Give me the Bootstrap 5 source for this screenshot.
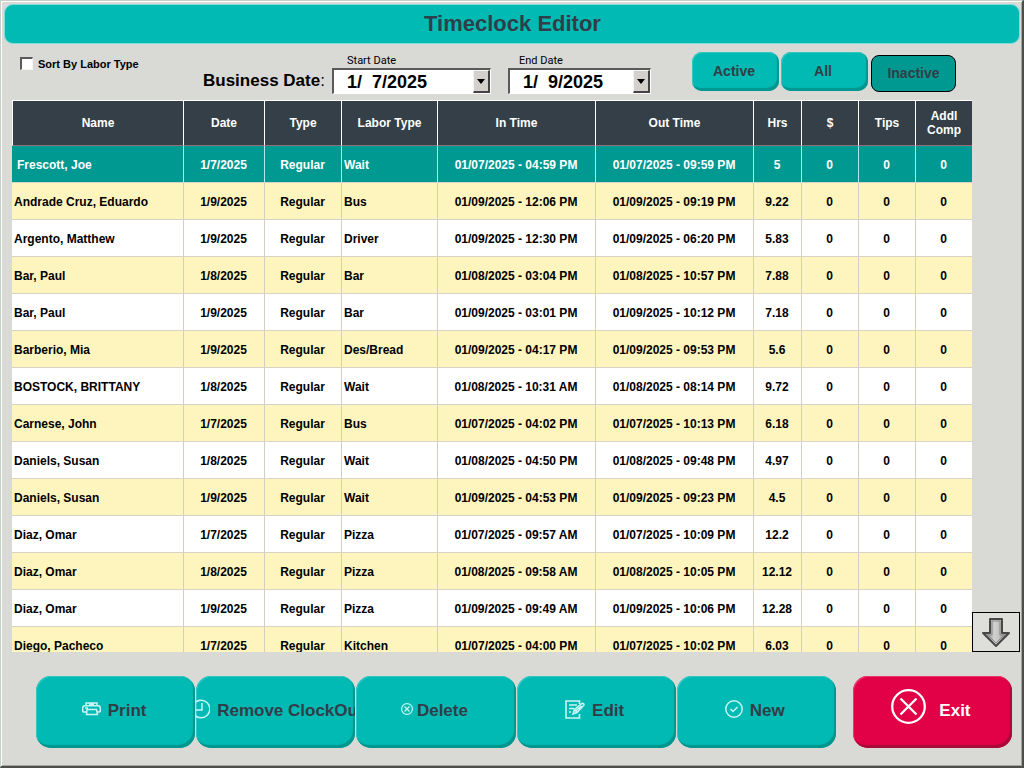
<!DOCTYPE html>
<html lang="en">
<head>
<meta charset="utf-8">
<meta name="viewport" content="width=device-width, initial-scale=1">
<title>Timeclock Editor</title>
<link href="https://cdn.jsdelivr.net/npm/bootstrap@5.3.0/dist/css/bootstrap.min.css" rel="stylesheet">
<style>
  :root { --teal: #00bab3; --teal-dark: #009992; --ink: #313d48; --panel: #d9d9d6; }
  body { font-family: "Liberation Sans", Arial, sans-serif; background: var(--panel); color: #000; }
  .window { border: 1px solid #c5d0c4; border-right: 2px solid #4e4e4c; border-bottom: 2px solid #4e4e4c; box-shadow: inset 1px 1px 0 #fff, inset -1px -1px 0 #a3a3a0; padding: 3px 2px 0 3px; }
  .title-bar { height: 41px; background: var(--teal); border: 1px solid #7fdcda; border-radius: 9px; color: var(--ink); font-size: 22px; line-height: 38px; font-weight: 700; padding-left: 1px; }
  .filters { height: 56px; padding-left: 16px; }
  .sort-check { width: 183px; padding-top: 13px; font-size: 11px; line-height: 14px; font-weight: 700; gap: 5px; }
  .sort-check input { appearance: none; width: 13px; height: 13px; margin: 0; background: #fff; border: 1px solid #f4f4f4; border-top: 2px solid #5a5a5a; border-left: 2px solid #5a5a5a; }
  .sort-check input:checked { background: #222; }
  .range-label { width: 129px; padding-top: 27px; font-size: 17px; line-height: 20px; font-weight: 700; white-space: nowrap; }
  .date-field { width: 159px; margin-right: 17px; padding-top: 10px; }
  .date-field.end { width: 143px; margin-right: 41px; }
  .date-field label { display: block; font-size: 11px; line-height: 14px; padding-left: 15px; font-family: Roboto, sans-serif; }
  .date-field.end label { padding-left: 11px; }
  .date-box { height: 26px; background: #fff; border: 2px solid #5a5a5a; border-right: 1px solid #fff; border-bottom: 1px solid #fff; }
  .date-box input { border: 0; background: none; outline: 0; width: 100%; min-width: 0; padding: 1px 0 0 13px; font-size: 18px; line-height: 20px; font-weight: 700; }
  .date-box button { flex: none; width: 17px; padding: 0; line-height: 0; background: #d4d0cb; border: 1px solid #f4f4f4; border-right: 2px solid #444; border-bottom: 2px solid #444; }
  .key { background: var(--teal); border: 0; color: var(--ink); font-weight: 700; overflow: hidden; white-space: nowrap;
         box-shadow: inset -2px -3px 1px #00958e, inset 1px 1px 0 #35c6c3; }
  .key-sm { width: 87px; height: 39px; margin: 8px 2px 0 0; padding: 0 3px 1px 0; border-radius: 10px; font-size: 14px; }
  .key-sm.pressed { width: 85px; height: 37px; margin: 11px 0 0 1px; padding: 0; background: var(--teal-dark); border: 1px solid #000; border-radius: 8px; box-shadow: none; }
  .sheet-area { min-height: 0; padding-left: 8px; }
  .sheet { min-width: 0; overflow: hidden; border-top: 1px solid #fff; }
  .sheet table { width: 100%; table-layout: fixed; border-collapse: separate; border-spacing: 0; font-size: 12px; line-height: 14px; font-weight: 700; text-align: center; }
  .sheet th { height: 45px; padding: 0; background: #343f47; color: #fff; border-right: 1px solid #fff; border-bottom: 1px solid #8e6f78; }
  .sheet th:first-child { border-left: 1px solid #fff; }
  .sheet td { height: 37px; padding: 2px 0 0; white-space: nowrap; border-right: 1px solid #d3cdc8; border-bottom: 1px solid #d9d3c6; background: #fff; }
  .sheet tr > :last-child { border-right: 0; }
  .sheet td:nth-child(n+2) { padding-right: 1px; }
  .sheet td:nth-child(1), .sheet td:nth-child(4) { text-align: left; padding-left: 2px; }
  .sheet tbody tr:nth-child(even) td { background: #fdf5bd; }
  .sheet tbody tr.chosen td { background: var(--teal-dark); color: #fff; border-right-color: #b4e6e4; }
  .sheet tbody tr.chosen td:first-child { padding-left: 5px; }
  .scroll-key { width: 48px; height: 40px; padding: 0; background: #dededb; border: 1px solid #000; line-height: 0; }
  .actions { padding: 24px 8px 18px 32px; gap: 1px; }
  .key-lg { flex: 1 1 0; min-width: 0; height: 72px; padding: 0 3px 3px 0; border-radius: 15px; font-size: 17px; gap: 7px; }
  .key-lg svg { flex: none; margin-bottom: 3px; fill: none; stroke: #c9f6f5; }
  .key-lg.exit { margin-left: 16px; gap: 13px; background: #e20046; color: #fff; box-shadow: inset -2px -3px 1px #a80b39, inset 1px 1px 0 #e83a6c; }
  .key-lg.exit svg { stroke: #fff; margin-bottom: 8px; }
</style>
</head>
<body>
<div class="window d-flex flex-column vh-100">
  <h1 class="title-bar text-center m-0">Timeclock Editor</h1>

  <div class="filters d-flex align-items-start flex-shrink-0">
    <div class="sort-check d-flex"><input type="checkbox" id="sort"><label for="sort">Sort By Labor Type</label></div>
    <div class="range-label">Business Date<span class="fw-normal">:</span></div>
    <div class="date-field">
      <label for="start">Start Date</label>
      <div class="date-box d-flex"><input type="text" id="start" value="1/  7/2025"><button type="button" aria-label="Open start calendar"><svg width="8" height="5"><path d="M0 0h8L4 5z"/></svg></button></div>
    </div>
    <div class="date-field end">
      <label for="end">End Date</label>
      <div class="date-box d-flex"><input type="text" id="end" value="1/  9/2025"><button type="button" aria-label="Open end calendar"><svg width="8" height="5"><path d="M0 0h8L4 5z"/></svg></button></div>
    </div>
    <button type="button" class="key key-sm">Active</button>
    <button type="button" class="key key-sm">All</button>
    <button type="button" class="key key-sm pressed">Inactive</button>
  </div>

  <main class="sheet-area d-flex flex-grow-1">
    <div class="sheet flex-grow-1">
      <table>
        <colgroup><col style="width:172px"><col style="width:81px"><col style="width:77px"><col style="width:96px"><col style="width:158px"><col style="width:158px"><col style="width:48px"><col style="width:57px"><col style="width:57px"><col style="width:56px"></colgroup>
        <thead><tr><th>Name</th><th>Date</th><th>Type</th><th>Labor Type</th><th>In Time</th><th>Out Time</th><th>Hrs</th><th>$</th><th>Tips</th><th>Addl<br>Comp</th></tr></thead>
        <tbody>
          <tr class="chosen"><td>Frescott, Joe</td><td>1/7/2025</td><td>Regular</td><td>Wait</td><td>01/07/2025 - 04:59 PM</td><td>01/07/2025 - 09:59 PM</td><td>5</td><td>0</td><td>0</td><td>0</td></tr>
          <tr><td>Andrade Cruz, Eduardo</td><td>1/9/2025</td><td>Regular</td><td>Bus</td><td>01/09/2025 - 12:06 PM</td><td>01/09/2025 - 09:19 PM</td><td>9.22</td><td>0</td><td>0</td><td>0</td></tr>
          <tr><td>Argento, Matthew</td><td>1/9/2025</td><td>Regular</td><td>Driver</td><td>01/09/2025 - 12:30 PM</td><td>01/09/2025 - 06:20 PM</td><td>5.83</td><td>0</td><td>0</td><td>0</td></tr>
          <tr><td>Bar, Paul</td><td>1/8/2025</td><td>Regular</td><td>Bar</td><td>01/08/2025 - 03:04 PM</td><td>01/08/2025 - 10:57 PM</td><td>7.88</td><td>0</td><td>0</td><td>0</td></tr>
          <tr><td>Bar, Paul</td><td>1/9/2025</td><td>Regular</td><td>Bar</td><td>01/09/2025 - 03:01 PM</td><td>01/09/2025 - 10:12 PM</td><td>7.18</td><td>0</td><td>0</td><td>0</td></tr>
          <tr><td>Barberio, Mia</td><td>1/9/2025</td><td>Regular</td><td>Des/Bread</td><td>01/09/2025 - 04:17 PM</td><td>01/09/2025 - 09:53 PM</td><td>5.6</td><td>0</td><td>0</td><td>0</td></tr>
          <tr><td>BOSTOCK, BRITTANY</td><td>1/8/2025</td><td>Regular</td><td>Wait</td><td>01/08/2025 - 10:31 AM</td><td>01/08/2025 - 08:14 PM</td><td>9.72</td><td>0</td><td>0</td><td>0</td></tr>
          <tr><td>Carnese, John</td><td>1/7/2025</td><td>Regular</td><td>Bus</td><td>01/07/2025 - 04:02 PM</td><td>01/07/2025 - 10:13 PM</td><td>6.18</td><td>0</td><td>0</td><td>0</td></tr>
          <tr><td>Daniels, Susan</td><td>1/8/2025</td><td>Regular</td><td>Wait</td><td>01/08/2025 - 04:50 PM</td><td>01/08/2025 - 09:48 PM</td><td>4.97</td><td>0</td><td>0</td><td>0</td></tr>
          <tr><td>Daniels, Susan</td><td>1/9/2025</td><td>Regular</td><td>Wait</td><td>01/09/2025 - 04:53 PM</td><td>01/09/2025 - 09:23 PM</td><td>4.5</td><td>0</td><td>0</td><td>0</td></tr>
          <tr><td>Diaz, Omar</td><td>1/7/2025</td><td>Regular</td><td>Pizza</td><td>01/07/2025 - 09:57 AM</td><td>01/07/2025 - 10:09 PM</td><td>12.2</td><td>0</td><td>0</td><td>0</td></tr>
          <tr><td>Diaz, Omar</td><td>1/8/2025</td><td>Regular</td><td>Pizza</td><td>01/08/2025 - 09:58 AM</td><td>01/08/2025 - 10:05 PM</td><td>12.12</td><td>0</td><td>0</td><td>0</td></tr>
          <tr><td>Diaz, Omar</td><td>1/9/2025</td><td>Regular</td><td>Pizza</td><td>01/09/2025 - 09:49 AM</td><td>01/09/2025 - 10:06 PM</td><td>12.28</td><td>0</td><td>0</td><td>0</td></tr>
          <tr><td>Diego, Pacheco</td><td>1/7/2025</td><td>Regular</td><td>Kitchen</td><td>01/07/2025 - 04:00 PM</td><td>01/07/2025 - 10:02 PM</td><td>6.03</td><td>0</td><td>0</td><td>0</td></tr>
        </tbody>
      </table>
    </div>
    <button type="button" class="scroll-key align-self-end flex-shrink-0" aria-label="Scroll down">
      <svg width="32" height="32" viewBox="0 0 32 32"><defs><linearGradient id="steel"><stop offset="0" stop-color="#777"/><stop offset=".45" stop-color="#d2d2d0"/><stop offset=".6" stop-color="#c4c4c2"/><stop offset="1" stop-color="#777"/></linearGradient></defs>
      <path d="M10 3h12v14h7L16 30 3 17h7z" fill="url(#steel)" stroke="#484848" stroke-width="2" stroke-linejoin="round"/><path d="M12 5h8v14h4l-8 8-8-8h4z" fill="none" stroke="#8b8b8b"/></svg>
    </button>
  </main>

  <footer class="actions d-flex">
    <button type="button" class="key key-lg d-flex align-items-center justify-content-center">
      <svg width="19" height="14" viewBox="0 0 19 14" stroke-width="1.5"><path d="M4 4V1h11v3M4 10H2Q.7 10 .7 8.500V6Q.7 3.700 3 3.700h13q2.300 0 2.300 2.300v2.500Q18.300 10 17 10h-2M5 7.500h9.500l1 5h-11zM3 6h3M4 3.700h8M7 2.300h5"/></svg>Print</button>
    <button type="button" class="key key-lg d-flex align-items-center justify-content-start">
      <svg width="14" height="20" viewBox="0 0 14 20" stroke-width="1.500"><circle cx="5" cy="10" r="8.800"/><path d="M6 4v7H0"/></svg>Remove ClockOut</button>
    <button type="button" class="key key-lg d-flex align-items-center justify-content-center gap-1">
      <svg width="12" height="12" viewBox="0 0 12 12" stroke-width="1.200"><circle cx="6" cy="6" r="5.400"/><path d="m3.500 3.500 5 5m0-5-5 5"/></svg>Delete</button>
    <button type="button" class="key key-lg d-flex align-items-center justify-content-center">
      <svg width="20" height="19" viewBox="0 0 20 19" stroke-width="1.600"><path d="M14.500 4V1H1v17h13.500v-4M4 5h8M4 8.500h5M4 12h2M8 14l1.500-4.500L17 3.500q2-.500 2 1.500l-7 7.500zM9.500 9.500l2.500 3M10.500 11l6-5"/></svg>Edit</button>
    <button type="button" class="key key-lg d-flex align-items-center justify-content-center">
      <svg width="18" height="18" viewBox="0 0 18 18" stroke-width="1.500"><circle cx="9" cy="9" r="8.200"/><path d="m5.500 9 2.500 2.500L12.500 7"/></svg>New</button>
    <button type="button" class="key key-lg exit d-flex align-items-center justify-content-center">
      <svg width="35" height="35" viewBox="0 0 35 35" stroke-width="2.300"><circle cx="17.500" cy="17.500" r="16.300"/><path d="m9.500 9.500 16 16m0-16-16 16"/></svg>Exit</button>
  </footer>
</div>
<script src="https://cdn.jsdelivr.net/npm/bootstrap@5.3.0/dist/js/bootstrap.bundle.min.js"></script>
</body>
</html>
